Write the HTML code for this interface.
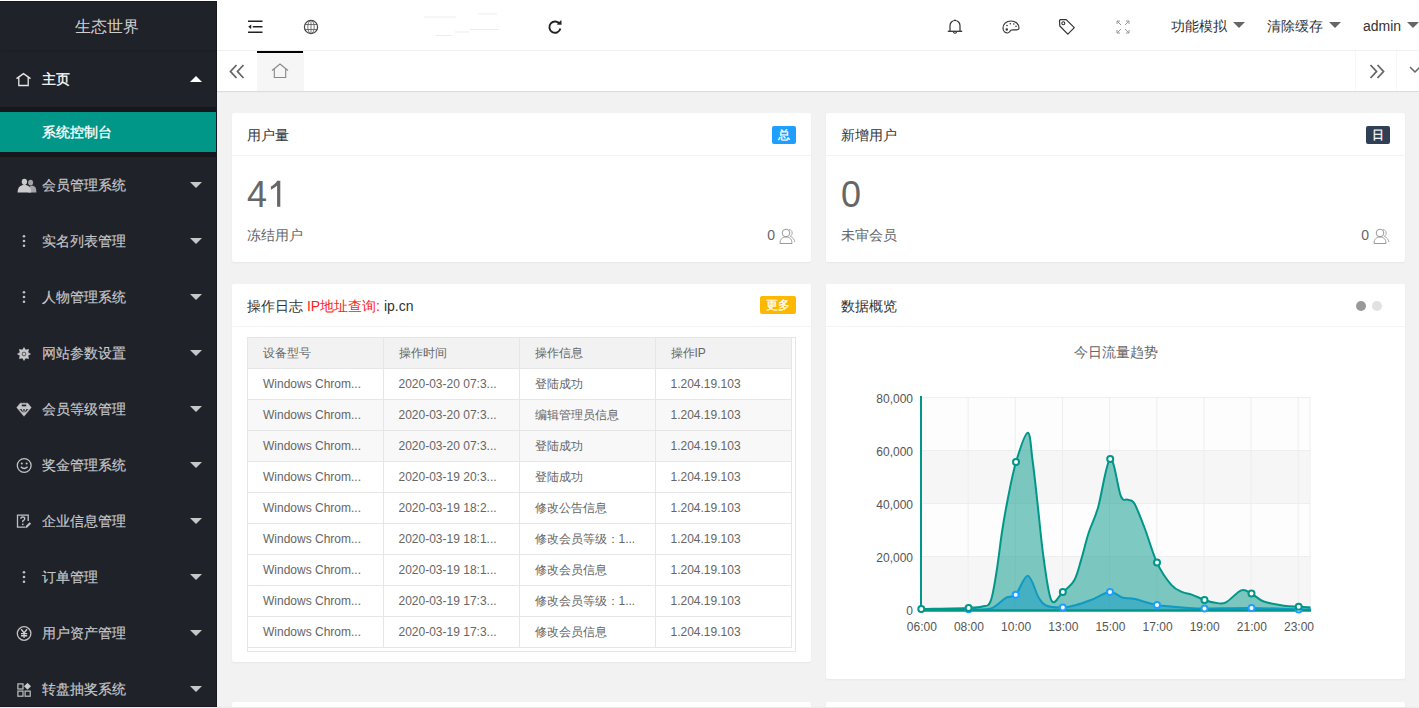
<!DOCTYPE html><html><head><meta charset="utf-8"><style>
*{margin:0;padding:0;box-sizing:border-box}
html,body{width:1419px;height:708px;overflow:hidden;background:#f2f2f2;font-family:"Liberation Sans",sans-serif;font-size:14px;color:#333}
#side{position:absolute;left:0;top:0;width:217px;height:708px;background:#20222a;overflow:hidden;border-right:1px solid #17181d}
#frt{position:absolute;left:0;top:0;width:1419px;height:1px;background:#fff;z-index:9}
#frt2{position:absolute;left:0;top:1px;width:217px;height:1px;background:#15171b;z-index:9}
#frb{position:absolute;left:0;top:707px;width:1419px;height:1px;background:#e9e9e9;z-index:9}
#frb2{position:absolute;left:0;top:706px;width:217px;height:1px;background:#17191d;z-index:9}
#logo{position:absolute;left:0;top:0;width:217px;height:50px;line-height:53px;text-align:center;color:rgba(255,255,255,.8);font-size:16px;box-shadow:0 1px 2px 0 rgba(0,0,0,.15);padding-right:4px}
.nav{position:absolute;left:0;width:217px;height:56px;color:rgba(255,255,255,.7)}
.nav .t{position:absolute;left:42px;top:0;line-height:56px;font-size:14px;white-space:nowrap;-webkit-text-stroke:.18px currentColor}
.nav svg{position:absolute}
.more{position:absolute;left:190px;top:25px;width:0;height:0;border-left:6px solid transparent;border-right:6px solid transparent;border-top:6px solid rgba(255,255,255,.75)}
.more.up{top:25px;border-top:0;border-bottom:6px solid #fff}
#child{position:absolute;left:0;top:107px;width:217px;height:50px;background:#16171d}
#child .on{position:absolute;left:0;top:5px;width:217px;height:40px;background:#009688;color:#fff;line-height:40px;padding-left:42px;-webkit-text-stroke:.3px #fff}
#head{position:absolute;left:217px;top:0;width:1202px;height:51px;background:#fff;border-bottom:1px solid #f0f0f0}
#head svg{position:absolute}
.hm{position:absolute;top:0;line-height:52px;color:#333;font-size:14px;white-space:nowrap}
.tri{display:inline-block;width:0;height:0;border-left:6px solid transparent;border-right:6px solid transparent;border-top:6px solid #666;vertical-align:middle;margin-left:6px;position:relative;top:-2px}
#tabs{position:absolute;left:217px;top:51px;width:1202px;height:40px;background:#fff;box-shadow:0 1px 1px rgba(0,0,0,.09)}
#tabs svg{position:absolute}
.card{position:absolute;background:#fff;border-radius:2px;box-shadow:0 1px 2px 0 rgba(0,0,0,.05)}
.ch{position:absolute;left:0;top:0;right:0;height:43px;line-height:44px;padding-left:15px;border-bottom:1px solid #f4f4f4;color:#333;font-size:14px;white-space:nowrap}
.badge{position:absolute;top:13px;right:15px;height:18px;line-height:18px;padding:0 6px;font-size:12px;color:#fff;border-radius:2px;-webkit-text-stroke:.3px #fff}
.big{position:absolute;left:15px;top:64px;font-size:36px;line-height:36px;color:#666}
.sub{position:absolute;left:15px;top:112px;font-size:14px;line-height:20px;color:#666}
.rt{position:absolute;right:36px;top:112px;font-size:14px;line-height:20px;color:#666}
.card svg{position:absolute}
#tv{position:absolute;left:15px;top:53px;width:549px;height:315px;border:1px solid #e6e6e6;overflow:hidden}
table{border-collapse:collapse;table-layout:fixed;position:absolute;left:0;top:0}
td{font-weight:normal;text-align:left;font-size:12px;color:#666;height:30px;padding:0 0 0 15px;border-right:1px solid #e6e6e6;border-bottom:1px solid #e6e6e6;white-space:nowrap;overflow:hidden;line-height:30px}
tr.th td{background:#f2f2f2}
tr.g td{background:#f8f8f8}
</style></head><body>
<div id="side"><div id="logo">生态世界</div>
<div class="nav" style="top:51px;color:#fff"><svg style="left:15px;top:20px" width="17" height="16" viewBox="0 0 17 16"><path d="M1.5 7.6 L8.5 2.6 L15.5 7.6 M3.8 6.2 V14.5 H13.2 V6.2" fill="none" stroke="#e8e8e8" stroke-width="1.3" stroke-linejoin="miter"/></svg><span class="t" style="-webkit-text-stroke:.3px #fff">主页</span><span class="more up"></span></div>
<div id="child"><div class="on">系统控制台</div></div>
<div class="nav" style="top:157px"><svg style="left:17px;top:20px" width="21" height="17" viewBox="0 0 21 17"><ellipse cx="13.6" cy="5.6" rx="2.5" ry="2.9" fill="#a4a5a8"/><path d="M11 15.6 C11 10.8 12.3 8.8 15.2 8.8 C18 8.8 19.4 10.8 19.4 15.6 Z" fill="#a4a5a8"/><ellipse cx="7.4" cy="4.8" rx="2.7" ry="3.1" fill="#cacbcd"/><path d="M0.6 15.6 C0.6 10.2 3.2 8 7.4 8 C11.6 8 14.2 10.2 14.2 15.6 Z" fill="#cacbcd"/></svg><span class="t">会员管理系统</span><span class="more"></span></div>
<div class="nav" style="top:213px"><svg style="left:21px;top:21px" width="6" height="14" viewBox="0 0 6 14"><circle cx="3" cy="2.2" r="1.3" fill="rgba(255,255,255,.72)"/><circle cx="3" cy="7" r="1.3" fill="rgba(255,255,255,.72)"/><circle cx="3" cy="11.8" r="1.3" fill="rgba(255,255,255,.72)"/></svg><span class="t">实名列表管理</span><span class="more"></span></div>
<div class="nav" style="top:269px"><svg style="left:21px;top:21px" width="6" height="14" viewBox="0 0 6 14"><circle cx="3" cy="2.2" r="1.3" fill="rgba(255,255,255,.72)"/><circle cx="3" cy="7" r="1.3" fill="rgba(255,255,255,.72)"/><circle cx="3" cy="11.8" r="1.3" fill="rgba(255,255,255,.72)"/></svg><span class="t">人物管理系统</span><span class="more"></span></div>
<div class="nav" style="top:325px"><svg style="left:16px;top:21px" width="16" height="16" viewBox="0 0 16 16"><polygon points="8.00,1.50 9.61,4.12 12.60,3.40 11.88,6.39 14.50,8.00 11.88,9.61 12.60,12.60 9.61,11.88 8.00,14.50 6.39,11.88 3.40,12.60 4.12,9.61 1.50,8.00 4.12,6.39 3.40,3.40 6.39,4.12" fill="#c8c9cb" stroke="#c8c9cb" stroke-width=".6" stroke-linejoin="round"/><circle cx="8" cy="8" r="1.9" fill="none" stroke="#555" stroke-width="1"/></svg><span class="t">网站参数设置</span><span class="more"></span></div>
<div class="nav" style="top:381px"><svg style="left:16px;top:21px" width="16" height="16" viewBox="0 0 16 16"><path d="M4.2 1.2 H11.8 L15.2 5.6 L8 14.3 L0.8 5.6 Z" fill="#c4c5c7" stroke="#c4c5c7" stroke-width=".5" stroke-linejoin="round"/><rect x="5.8" y="2.6" width="4.4" height="1.7" fill="#20222a"/><path d="M3.6 7.2 H5.9 L7.2 10.8 Z M7.1 7.2 H8.9 L8 11.2 Z M10.1 7.2 H12.4 L8.8 10.8 Z" fill="#20222a"/></svg><span class="t">会员等级管理</span><span class="more"></span></div>
<div class="nav" style="top:437px"><svg style="left:16px;top:20px" width="17" height="17" viewBox="0 0 17 17"><circle cx="8.2" cy="8.5" r="6.9" fill="none" stroke="rgba(255,255,255,.72)" stroke-width="1.3"/><circle cx="5.8" cy="6.6" r="1" fill="rgba(255,255,255,.72)"/><circle cx="10.6" cy="6.6" r="1" fill="rgba(255,255,255,.72)"/><path d="M4.8 9.8 Q8.2 13.2 11.6 9.8" fill="none" stroke="rgba(255,255,255,.72)" stroke-width="1.3"/></svg><span class="t">奖金管理系统</span><span class="more"></span></div>
<div class="nav" style="top:493px"><svg style="left:16px;top:21px" width="17" height="17" viewBox="0 0 17 17"><path d="M9 13.2 H1.5 V1.2 H12.2 V7" fill="none" stroke="rgba(255,255,255,.72)" stroke-width="1.3"/><path d="M4.8 4.8 Q4.8 3 6.8 3 Q8.8 3 8.8 4.8 Q8.8 6.1 6.8 6.9 V8.3" fill="none" stroke="rgba(255,255,255,.72)" stroke-width="1.3"/><circle cx="6.8" cy="10.3" r=".85" fill="rgba(255,255,255,.72)"/><path d="M9.3 14.2 L9.8 12 L13.6 8.2 L15.1 9.7 L11.3 13.5 Z" fill="rgba(255,255,255,.72)"/></svg><span class="t">企业信息管理</span><span class="more"></span></div>
<div class="nav" style="top:549px"><svg style="left:21px;top:21px" width="6" height="14" viewBox="0 0 6 14"><circle cx="3" cy="2.2" r="1.3" fill="rgba(255,255,255,.72)"/><circle cx="3" cy="7" r="1.3" fill="rgba(255,255,255,.72)"/><circle cx="3" cy="11.8" r="1.3" fill="rgba(255,255,255,.72)"/></svg><span class="t">订单管理</span><span class="more"></span></div>
<div class="nav" style="top:605px"><svg style="left:16px;top:20px" width="17" height="17" viewBox="0 0 17 17"><circle cx="8.1" cy="8.5" r="6.8" fill="none" stroke="rgba(255,255,255,.72)" stroke-width="1.3"/><path d="M5.2 4.2 L8.1 7.9 L11 4.2 M8.1 7.9 V12.8 M5 8.6 H11.2 M5 10.7 H11.2" fill="none" stroke="#cfd0d2" stroke-width="1.4"/></svg><span class="t">用户资产管理</span><span class="more"></span></div>
<div class="nav" style="top:661px"><svg style="left:17px;top:22px" width="16" height="16" viewBox="0 0 16 16"><rect x="0.9" y="0.9" width="5.1" height="5.1" fill="none" stroke="rgba(255,255,255,.72)" stroke-width="1.2"/><rect x="0.9" y="8.1" width="5.1" height="5.1" fill="none" stroke="rgba(255,255,255,.72)" stroke-width="1.2"/><rect x="8.1" y="8.1" width="5.1" height="5.1" fill="none" stroke="rgba(255,255,255,.72)" stroke-width="1.2"/><path d="M10.5 -0.2 L14 3.3 L10.5 6.8 L7 3.3 Z" fill="#c8c9cb"/></svg><span class="t">转盘抽奖系统</span><span class="more"></span></div>
</div>
<div id="head">
<svg style="left:30px;top:19px" width="17" height="15" viewBox="0 0 17 15"><path d="M1 2.3 H15.5 M5.8 7.8 H15.5 M1 13.3 H15.5" stroke="#222" stroke-width="1.4"/><path d="M1.2 7.8 L4.2 5.6 V10 Z" fill="#222"/></svg>
<svg style="left:86px;top:19px" width="16" height="16" viewBox="0 0 16 16"><circle cx="8" cy="8" r="6.6" fill="none" stroke="#444" stroke-width="1.2"/><ellipse cx="8" cy="8" rx="3.2" ry="6.6" fill="none" stroke="#555" stroke-width=".8"/><path d="M8 1.4 V14.6 M1.8 5.5 H14.2 M1.8 10.5 H14.2" stroke="#555" stroke-width=".8"/></svg>
<svg style="left:130px;top:10px" width="170" height="30" viewBox="347 10 170 30"><path d="M424 17 H456 M478 14 H497 M470 29.5 H499 M455 32 H469 M436 35.5 H452" stroke="#ededed" stroke-width="1"/></svg>
<svg style="left:330px;top:19px" width="16" height="16" viewBox="0 0 16 16"><path d="M12.6 5 A5.6 5.6 0 1 0 13.4 9.5" fill="none" stroke="#222" stroke-width="1.9"/><path d="M9.6 5.6 L14.6 5.8 L14.3 0.9 Z" fill="#222"/></svg>
<svg style="left:730px;top:19px" width="16" height="16" viewBox="0 0 16 16"><path d="M3 12 V6.5 A5 5 0 0 1 13 6.5 V12" fill="none" stroke="#333" stroke-width="1.2"/><path d="M0.8 12.3 H15.2" stroke="#333" stroke-width="1.3"/><path d="M6.3 13 Q8 15.6 9.7 13" fill="none" stroke="#333" stroke-width="1.1"/><path d="M7 1.3 H9" stroke="#333" stroke-width="1.2"/></svg>
<svg style="left:785px;top:20px" width="18" height="14" viewBox="0 0 18 14"><path d="M9 1 C4 1 1 4.5 1 8 C1 11.5 3.5 13 5.5 13 C8 13 7.5 10.5 9.5 10 C12 9.5 17 11 17 8 C17 4 13.5 1 9 1 Z" fill="none" stroke="#333" stroke-width="1.2"/><circle cx="4.8" cy="9.5" r="1.2" fill="#333"/><circle cx="5" cy="5.5" r=".8" fill="#333"/><circle cx="8.3" cy="3.8" r=".8" fill="#333"/><circle cx="11.8" cy="4" r=".8" fill="#333"/><circle cx="14" cy="6.3" r=".8" fill="#333"/></svg>
<svg style="left:841px;top:18px" width="18" height="18" viewBox="0 0 18 18"><path d="M1.5 2.5 L1.8 8 L9.8 16.2 L16.3 9.7 L8.2 1.6 L2.5 1.5 Z" fill="none" stroke="#333" stroke-width="1.2" stroke-linejoin="round"/><circle cx="5.3" cy="5.3" r="1.5" fill="none" stroke="#333" stroke-width="1.1"/></svg>
<svg style="left:899px;top:20px" width="14" height="14" viewBox="0 0 14 14"><path d="M1 1 L5 5 M1 1 H4 M1 1 V4 M13 1 L9 5 M13 1 H10 M13 1 V4 M1 13 L5 9 M1 13 H4 M1 13 V10 M13 13 L9 9 M13 13 H10 M13 13 V10" stroke="#999" stroke-width="1" fill="none"/></svg>
<span class="hm" style="left:954px">功能模拟<i class="tri"></i></span>
<span class="hm" style="left:1050px">清除缓存<i class="tri"></i></span>
<span class="hm" style="left:1146px">admin<i class="tri"></i></span>
</div>
<div id="tabs">
<svg style="left:12px;top:13px" width="16" height="15" viewBox="0 0 16 15"><path d="M7.5 1 L1.5 7.5 L7.5 14 M14.5 1 L8.5 7.5 L14.5 14" fill="none" stroke="#666" stroke-width="1.8"/></svg>
<div style="position:absolute;left:40px;top:0;width:47px;height:40px;background:#f6f6f6"></div>
<div style="position:absolute;left:40px;top:0;width:46px;height:2px;background:#000"></div>
<svg style="left:54px;top:12px" width="18" height="16" viewBox="0 0 18 16"><path d="M1 7.5 L9 1 L17 7.5 M3.3 5.8 V14.5 H14.7 V5.8" fill="none" stroke="#888" stroke-width="1.1"/></svg>
<div style="position:absolute;left:1138px;top:0;width:1px;height:40px;background:#f6f6f6"></div>
<div style="position:absolute;left:1179px;top:0;width:1px;height:40px;background:#f6f6f6"></div>
<svg style="left:1152px;top:13px" width="16" height="15" viewBox="0 0 16 15"><path d="M1.5 1 L7.5 7.5 L1.5 14 M8.5 1 L14.5 7.5 L8.5 14" fill="none" stroke="#666" stroke-width="1.8"/></svg>
<svg style="left:1192px;top:14px" width="12" height="10" viewBox="0 0 12 10"><path d="M1 2 L6 7 L11 2" fill="none" stroke="#666" stroke-width="1.5"/></svg>
</div>
<div class="card" style="left:232px;top:113px;width:579px;height:149px"><div class="ch">用户量</div><span class="badge" style="background:#1e9fff">总</span><div class="big">4</div><svg style="left:0;top:0" width="60" height="100" viewBox="232 113 60 100"><path d="M280.3 180.8 V206.8 H277.1 V185.6 C275.4 187.3 273.3 188.6 270.9 189.7 V186.6 C273.4 185.3 275.9 183.2 277.3 180.8 Z" fill="#666"/></svg><div class="sub">冻结用户</div><div class="rt">0</div><svg style="right:15px;top:115px" width="17" height="17" viewBox="0 0 17 17"><circle cx="7" cy="5" r="3.8" fill="none" stroke="#999" stroke-width="1"/><path d="M1 15.5 C1 11 3.5 9 7 9 C10.5 9 13 11 13 15.5 Z" fill="none" stroke="#999" stroke-width="1"/><path d="M10 1.6 C12 1.6 13.2 3.2 13.2 5 C13.2 6.4 12.5 7.6 11.3 8.3 C13.8 9.4 15.5 11.3 15.8 14" fill="none" stroke="#aaa" stroke-width="1"/></svg></div>
<div class="card" style="left:826px;top:113px;width:579px;height:149px"><div class="ch">新增用户</div><span class="badge" style="background:#2f4056">日</span><div class="big">0</div><div class="sub">未审会员</div><div class="rt">0</div><svg style="right:15px;top:115px" width="17" height="17" viewBox="0 0 17 17"><circle cx="7" cy="5" r="3.8" fill="none" stroke="#999" stroke-width="1"/><path d="M1 15.5 C1 11 3.5 9 7 9 C10.5 9 13 11 13 15.5 Z" fill="none" stroke="#999" stroke-width="1"/><path d="M10 1.6 C12 1.6 13.2 3.2 13.2 5 C13.2 6.4 12.5 7.6 11.3 8.3 C13.8 9.4 15.5 11.3 15.8 14" fill="none" stroke="#aaa" stroke-width="1"/></svg></div>
<div class="card" style="left:232px;top:284px;width:579px;height:378px"><div class="ch">操作日志 <span style="color:#ff2020">IP地址查询:</span> ip.cn</div><span class="badge" style="background:#ffb800;top:12px">更多</span><div id="tv"><table><colgroup><col style="width:135px"><col style="width:136px"><col style="width:136px"><col style="width:136px"></colgroup><tr class="th"><td>设备型号</td><td>操作时间</td><td>操作信息</td><td>操作IP</td></tr><tr><td>Windows Chrom...</td><td>2020-03-20 07:3...</td><td>登陆成功</td><td>1.204.19.103</td></tr><tr class="g"><td>Windows Chrom...</td><td>2020-03-20 07:3...</td><td>编辑管理员信息</td><td>1.204.19.103</td></tr><tr class="g"><td>Windows Chrom...</td><td>2020-03-20 07:3...</td><td>登陆成功</td><td>1.204.19.103</td></tr><tr><td>Windows Chrom...</td><td>2020-03-19 20:3...</td><td>登陆成功</td><td>1.204.19.103</td></tr><tr><td>Windows Chrom...</td><td>2020-03-19 18:2...</td><td>修改公告信息</td><td>1.204.19.103</td></tr><tr><td>Windows Chrom...</td><td>2020-03-19 18:1...</td><td>修改会员等级：1...</td><td>1.204.19.103</td></tr><tr><td>Windows Chrom...</td><td>2020-03-19 18:1...</td><td>修改会员信息</td><td>1.204.19.103</td></tr><tr><td>Windows Chrom...</td><td>2020-03-19 17:3...</td><td>修改会员等级：1...</td><td>1.204.19.103</td></tr><tr><td>Windows Chrom...</td><td>2020-03-19 17:3...</td><td>修改会员信息</td><td>1.204.19.103</td></tr></table></div></div>
<div class="card" style="left:826px;top:284px;width:579px;height:395px"><div class="ch">数据概览</div><span style="position:absolute;left:530px;top:17px;width:10px;height:10px;border-radius:5px;background:#999"></span><span style="position:absolute;left:546px;top:17px;width:10px;height:10px;border-radius:5px;background:#e2e2e2"></span><svg style="left:0;top:0" width="579" height="395" viewBox="0 0 579 395">
<text x="289.5" y="73" text-anchor="middle" font-size="14" fill="#666">今日流量趋势</text>
<rect x="95" y="113" width="389" height="53" fill="#fdfdfd"/>
<rect x="95" y="166" width="389" height="53" fill="#f6f6f6"/>
<rect x="95" y="219" width="389" height="53" fill="#fdfdfd"/>
<rect x="95" y="272" width="389" height="53.5" fill="#f6f6f6"/>
<path d="M95 113.5 H484" stroke="#eee" stroke-width="1"/>
<path d="M95 166.5 H484" stroke="#eee" stroke-width="1"/>
<path d="M95 219.5 H484" stroke="#eee" stroke-width="1"/>
<path d="M95 272.5 H484" stroke="#eee" stroke-width="1"/>
<path d="M142.1 113 V325.5" stroke="#eee" stroke-width="1"/>
<path d="M189.3 113 V325.5" stroke="#eee" stroke-width="1"/>
<path d="M236.5 113 V325.5" stroke="#eee" stroke-width="1"/>
<path d="M283.6 113 V325.5" stroke="#eee" stroke-width="1"/>
<path d="M330.8 113 V325.5" stroke="#eee" stroke-width="1"/>
<path d="M377.9 113 V325.5" stroke="#eee" stroke-width="1"/>
<path d="M425.0 113 V325.5" stroke="#eee" stroke-width="1"/>
<path d="M472.2 113 V325.5" stroke="#eee" stroke-width="1"/>
<path d="M484.0 113 V325.5" stroke="#eee" stroke-width="1"/>
<text x="87" y="118.5" text-anchor="end" font-size="12" fill="#555">80,000</text>
<text x="87" y="171.5" text-anchor="end" font-size="12" fill="#555">60,000</text>
<text x="87" y="224.5" text-anchor="end" font-size="12" fill="#555">40,000</text>
<text x="87" y="277.5" text-anchor="end" font-size="12" fill="#555">20,000</text>
<text x="87" y="331.0" text-anchor="end" font-size="12" fill="#555">0</text>
<text x="95.8" y="347" text-anchor="middle" font-size="12" fill="#555">06:00</text>
<text x="142.9" y="347" text-anchor="middle" font-size="12" fill="#555">08:00</text>
<text x="190.1" y="347" text-anchor="middle" font-size="12" fill="#555">10:00</text>
<text x="237.3" y="347" text-anchor="middle" font-size="12" fill="#555">13:00</text>
<text x="284.4" y="347" text-anchor="middle" font-size="12" fill="#555">15:00</text>
<text x="331.6" y="347" text-anchor="middle" font-size="12" fill="#555">17:00</text>
<text x="378.7" y="347" text-anchor="middle" font-size="12" fill="#555">19:00</text>
<text x="425.8" y="347" text-anchor="middle" font-size="12" fill="#555">21:00</text>
<text x="473.0" y="347" text-anchor="middle" font-size="12" fill="#555">23:00</text>
<path d="M95.0 325.5 C102.9 325.5 130.9 325.5 142.6 325.3 C154.3 325.1 158.8 326.4 165.0 324.5 C171.2 322.6 175.7 316.1 179.8 313.8 C183.9 311.5 186.0 314.4 189.7 310.7 C193.4 307.0 198.0 291.4 201.8 291.8 C205.6 292.2 209.5 308.3 212.5 313.2 C215.5 318.2 216.0 319.8 220.0 321.5 C224.0 323.2 231.8 323.5 236.8 323.4 C241.8 323.3 245.3 322.2 250.0 321.0 C254.7 319.8 259.3 318.2 265.0 316.0 C270.7 313.8 278.8 308.4 284.0 308.0 C289.2 307.6 291.8 312.3 296.0 313.5 C300.2 314.7 303.2 313.8 309.0 315.0 C314.8 316.2 321.8 319.4 331.0 320.9 C340.2 322.4 356.1 323.4 364.0 324.0 C371.9 324.6 368.2 324.5 378.5 324.5 C388.8 324.5 409.8 323.8 425.5 323.9 C441.2 324.0 462.9 325.2 472.7 325.4 C482.5 325.6 482.5 325.1 484.5 325.0 L484.5 326.5 L95.0 326.5 Z" fill="rgba(30,159,255,.5)"/>
<path d="M95.0 325.5 C102.9 325.5 130.9 325.5 142.6 325.3 C154.3 325.1 158.8 326.4 165.0 324.5 C171.2 322.6 175.7 316.1 179.8 313.8 C183.9 311.5 186.0 314.4 189.7 310.7 C193.4 307.0 198.0 291.4 201.8 291.8 C205.6 292.2 209.5 308.3 212.5 313.2 C215.5 318.2 216.0 319.8 220.0 321.5 C224.0 323.2 231.8 323.5 236.8 323.4 C241.8 323.3 245.3 322.2 250.0 321.0 C254.7 319.8 259.3 318.2 265.0 316.0 C270.7 313.8 278.8 308.4 284.0 308.0 C289.2 307.6 291.8 312.3 296.0 313.5 C300.2 314.7 303.2 313.8 309.0 315.0 C314.8 316.2 321.8 319.4 331.0 320.9 C340.2 322.4 356.1 323.4 364.0 324.0 C371.9 324.6 368.2 324.5 378.5 324.5 C388.8 324.5 409.8 323.8 425.5 323.9 C441.2 324.0 462.9 325.2 472.7 325.4 C482.5 325.6 482.5 325.1 484.5 325.0" fill="none" stroke="#1e9fff" stroke-width="2" stroke-linejoin="round"/>
<path d="M95.3 325.0 C103.2 324.8 132.5 324.3 142.6 323.9 C152.8 323.5 152.6 323.6 156.2 322.5 C159.9 321.4 162.1 323.2 164.5 317.5 C166.9 311.8 168.6 299.6 170.5 288.0 C172.4 276.4 174.2 259.9 176.0 248.0 C177.8 236.1 179.2 228.2 181.5 216.5 C183.8 204.8 186.6 189.3 190.0 178.0 C193.4 166.7 199.0 149.0 201.7 148.7 C204.5 148.4 204.9 164.7 206.5 176.0 C208.1 187.3 209.4 200.2 211.2 216.5 C213.1 232.8 215.2 257.3 217.6 274.0 C220.0 290.7 222.3 310.9 225.5 316.6 C228.7 322.3 233.0 311.5 236.8 308.1 C240.6 304.7 245.3 301.6 248.4 296.0 C251.5 290.4 253.1 282.4 255.5 274.6 C257.9 266.8 259.8 257.5 262.6 249.0 C265.3 240.5 268.4 236.1 272.0 223.8 C275.6 211.5 280.4 177.0 284.2 175.0 C288.0 173.0 291.9 205.2 294.8 212.0 C297.7 218.8 299.3 214.4 301.6 215.7 C303.9 217.0 305.6 214.9 308.4 219.6 C311.2 224.3 314.8 234.2 318.6 244.0 C322.4 253.8 326.6 269.1 331.0 278.6 C335.4 288.1 341.0 295.9 345.3 300.8 C349.5 305.7 353.1 306.6 356.5 308.2 C359.9 309.8 361.9 309.3 365.6 310.6 C369.3 311.9 374.6 314.6 378.5 316.0 C382.4 317.4 385.6 318.4 389.2 318.8 C392.8 319.2 395.7 320.4 400.0 318.3 C404.3 316.2 411.0 307.8 415.2 306.4 C419.5 304.9 421.8 307.8 425.5 309.6 C429.2 311.5 432.3 315.5 437.7 317.5 C443.1 319.5 452.2 320.8 458.0 321.7 C463.8 322.6 468.3 322.5 472.7 322.8 C477.1 323.1 482.5 323.3 484.5 323.4 L484.5 326.5 L95.3 326.5 Z" fill="rgba(0,150,136,.5)"/>
<path d="M95.3 325.0 C103.2 324.8 132.5 324.3 142.6 323.9 C152.8 323.5 152.6 323.6 156.2 322.5 C159.9 321.4 162.1 323.2 164.5 317.5 C166.9 311.8 168.6 299.6 170.5 288.0 C172.4 276.4 174.2 259.9 176.0 248.0 C177.8 236.1 179.2 228.2 181.5 216.5 C183.8 204.8 186.6 189.3 190.0 178.0 C193.4 166.7 199.0 149.0 201.7 148.7 C204.5 148.4 204.9 164.7 206.5 176.0 C208.1 187.3 209.4 200.2 211.2 216.5 C213.1 232.8 215.2 257.3 217.6 274.0 C220.0 290.7 222.3 310.9 225.5 316.6 C228.7 322.3 233.0 311.5 236.8 308.1 C240.6 304.7 245.3 301.6 248.4 296.0 C251.5 290.4 253.1 282.4 255.5 274.6 C257.9 266.8 259.8 257.5 262.6 249.0 C265.3 240.5 268.4 236.1 272.0 223.8 C275.6 211.5 280.4 177.0 284.2 175.0 C288.0 173.0 291.9 205.2 294.8 212.0 C297.7 218.8 299.3 214.4 301.6 215.7 C303.9 217.0 305.6 214.9 308.4 219.6 C311.2 224.3 314.8 234.2 318.6 244.0 C322.4 253.8 326.6 269.1 331.0 278.6 C335.4 288.1 341.0 295.9 345.3 300.8 C349.5 305.7 353.1 306.6 356.5 308.2 C359.9 309.8 361.9 309.3 365.6 310.6 C369.3 311.9 374.6 314.6 378.5 316.0 C382.4 317.4 385.6 318.4 389.2 318.8 C392.8 319.2 395.7 320.4 400.0 318.3 C404.3 316.2 411.0 307.8 415.2 306.4 C419.5 304.9 421.8 307.8 425.5 309.6 C429.2 311.5 432.3 315.5 437.7 317.5 C443.1 319.5 452.2 320.8 458.0 321.7 C463.8 322.6 468.3 322.5 472.7 322.8 C477.1 323.1 482.5 323.3 484.5 323.4" fill="none" stroke="#009688" stroke-width="2" stroke-linejoin="round"/>
<path d="M95 112 V327" stroke="#009688" stroke-width="2"/>
<path d="M94 326.5 H485" stroke="#009688" stroke-width="2.5"/>
<circle cx="142.6" cy="325.3" r="3" fill="#fff" stroke="#1e9fff" stroke-width="2"/><circle cx="189.7" cy="310.7" r="3" fill="#fff" stroke="#1e9fff" stroke-width="2"/><circle cx="236.8" cy="323.4" r="3" fill="#fff" stroke="#1e9fff" stroke-width="2"/><circle cx="284.0" cy="308.0" r="3" fill="#fff" stroke="#1e9fff" stroke-width="2"/><circle cx="331.0" cy="320.9" r="3" fill="#fff" stroke="#1e9fff" stroke-width="2"/><circle cx="378.5" cy="324.5" r="3" fill="#fff" stroke="#1e9fff" stroke-width="2"/><circle cx="425.5" cy="323.9" r="3" fill="#fff" stroke="#1e9fff" stroke-width="2"/><circle cx="472.7" cy="325.4" r="3" fill="#fff" stroke="#1e9fff" stroke-width="2"/>
<circle cx="95.3" cy="325.0" r="3" fill="#fff" stroke="#009688" stroke-width="2"/><circle cx="142.6" cy="323.9" r="3" fill="#fff" stroke="#009688" stroke-width="2"/><circle cx="190.0" cy="178.0" r="3" fill="#fff" stroke="#009688" stroke-width="2"/><circle cx="236.8" cy="308.1" r="3" fill="#fff" stroke="#009688" stroke-width="2"/><circle cx="284.2" cy="175.0" r="3" fill="#fff" stroke="#009688" stroke-width="2"/><circle cx="331.0" cy="278.6" r="3" fill="#fff" stroke="#009688" stroke-width="2"/><circle cx="378.5" cy="316.0" r="3" fill="#fff" stroke="#009688" stroke-width="2"/><circle cx="425.5" cy="309.6" r="3" fill="#fff" stroke="#009688" stroke-width="2"/><circle cx="472.7" cy="322.8" r="3" fill="#fff" stroke="#009688" stroke-width="2"/>
</svg></div>
<div class="card" style="left:232px;top:702px;width:579px;height:20px"></div>
<div class="card" style="left:826px;top:702px;width:579px;height:20px"></div>
<div id="frt"></div><div id="frt2"></div><div id="frb"></div><div id="frb2"></div>
</body></html>
